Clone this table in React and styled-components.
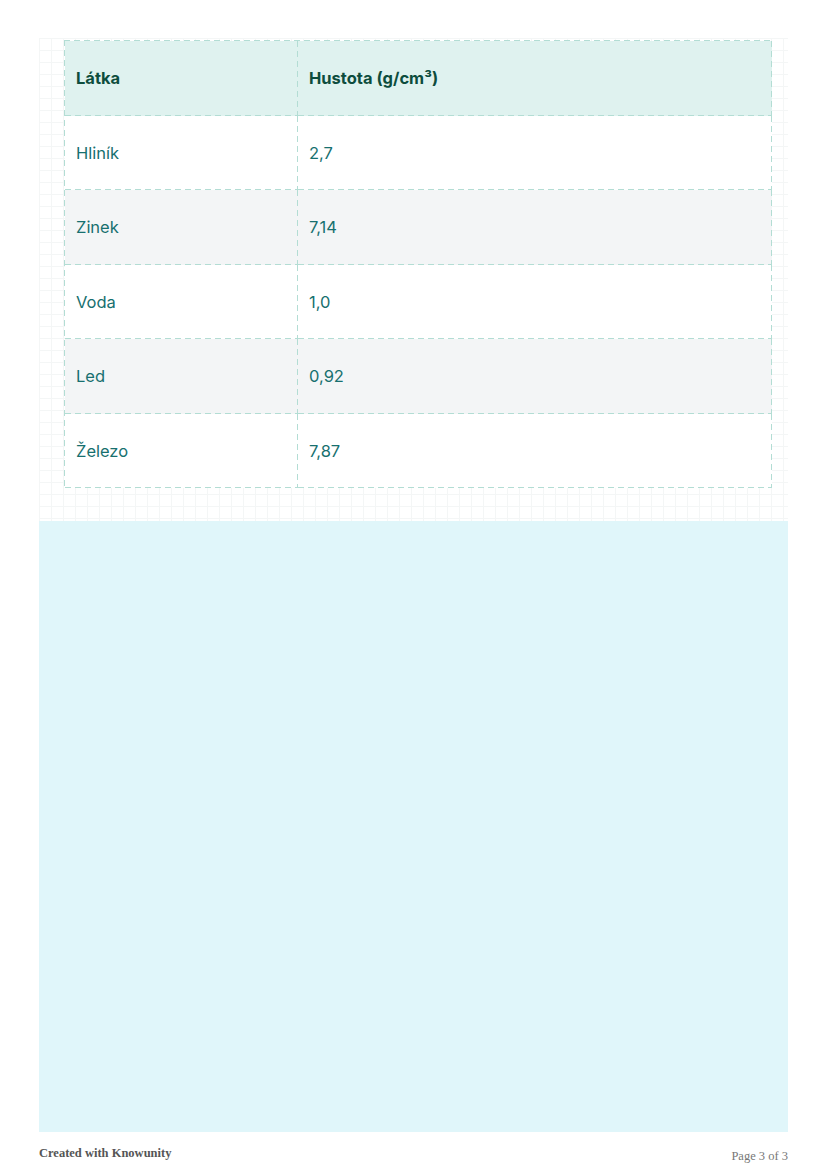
import React from 'react';
import styled, { createGlobalStyle } from 'styled-components';

const GlobalStyle = createGlobalStyle`
  body {
    margin: 0;
    background: #ffffff;
    font-family: Inter, "Noto Sans", sans-serif;
  }
`;

const dash = '#b3ddd4';

const Page = styled.div`
  width: 828px;
  height: 1171px;
  padding: 38px 40px 0 39px;
  box-sizing: border-box;
  display: flex;
  flex-direction: column;
`;

const GridArea = styled.div`
  padding: 2px 16px 33px 25px;
  background-color: #ffffff;
  background-image:
    linear-gradient(to right, #f4f6f6 1px, transparent 1px),
    linear-gradient(to bottom, #f4f6f6 1px, transparent 1px);
  background-size: 12px 12px;
`;

const Table = styled.div`
  display: grid;
  grid-template-columns: 233px 1fr;
  padding: 1px 0 0 1px;
  background:
    linear-gradient(to right, ${dash} 60%, transparent 60%) top left / 10px 1px repeat-x,
    linear-gradient(to bottom, ${dash} 60%, transparent 60%) top left / 1px 10px repeat-y;
`;

const Cell = styled.div`
  height: 74.5px;
  box-sizing: border-box;
  display: flex;
  align-items: center;
  padding-left: 11px;
  font-size: 16.5px;
  background:
    linear-gradient(to right, ${dash} 60%, transparent 60%) bottom left / 10px 1px repeat-x,
    linear-gradient(to bottom, ${dash} 60%, transparent 60%) top right / 1px 10px repeat-y,
    ${p => (p.$head ? '#dff2ef' : p.$alt ? '#f3f5f6' : '#ffffff')};
  color: ${p => (p.$head ? '#0d4d3d' : '#17706f')};
  font-weight: ${p => (p.$head ? 700 : 400)};
`;

const Panel = styled.div`
  height: 611px;
  background: #e0f6fa;
`;

const Footer = styled.div`
  display: flex;
  justify-content: space-between;
  padding-top: 14px;
  font-family: "Liberation Serif", serif;
  font-size: 12.5px;
`;

const Brand = styled.span`
  font-weight: 700;
  color: #555;
`;

const PageNo = styled.span`
  color: #777;
  padding-top: 3px;
`;

const rows = [
  ['Hliník', '2,7'],
  ['Zinek', '7,14'],
  ['Voda', '1,0'],
  ['Led', '0,92'],
  ['Železo', '7,87'],
];

export default function App() {
  return (
    <>
      <GlobalStyle />
      <Page>
        <GridArea>
          <Table>
            <Cell $head>Látka</Cell>
            <Cell $head>Hustota (g/cm³)</Cell>
            {rows.map((r, i) => (
              <React.Fragment key={i}>
                <Cell $alt={i % 2 === 1}>{r[0]}</Cell>
                <Cell $alt={i % 2 === 1}>{r[1]}</Cell>
              </React.Fragment>
            ))}
          </Table>
        </GridArea>
        <Panel />
        <Footer>
          <Brand>Created with Knowunity</Brand>
          <PageNo>Page 3 of 3</PageNo>
        </Footer>
      </Page>
    </>
  );
}
